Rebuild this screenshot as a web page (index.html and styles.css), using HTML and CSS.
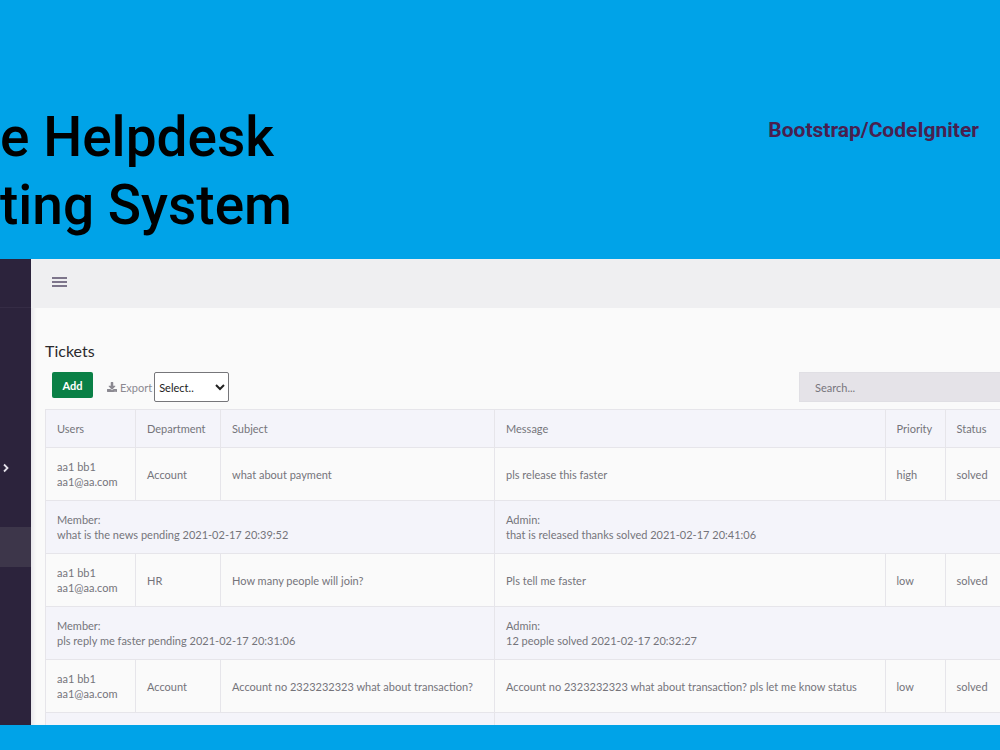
FILE: index.html
```html
<!DOCTYPE html>
<html lang="en">
<head>
    <meta charset="UTF-8">
    <meta name="viewport" content="width=device-width, initial-scale=1.0">
    <title>Helpdesk Ticketing System</title>
    <link rel="stylesheet" href="styles.css">
</head>
<body>
    <!-- Banner -->
    <header class="banner">
        <h1 class="banner-title">e Helpdesk<br>ting System</h1>
        <p class="banner-tech">Bootstrap/CodeIgniter</p>
    </header>

    <div class="app">
        <!-- Sidebar -->
        <nav class="sidebar" aria-label="Main menu">
            <div class="sidebar-brand"></div>
            <a href="#" class="sidebar-link" aria-label="Open submenu">
                <svg width="6" height="10" viewBox="0 0 6 10"><path d="M1 1.5L4.5 5L1 8.5" fill="none" stroke="#e4e1ea" stroke-width="1.8"/></svg>
            </a>
            <a href="#" class="sidebar-link active" aria-label="Tickets"></a>
        </nav>

        <div class="main">
            <div class="topbar">
                <button class="menu-btn" aria-label="Toggle menu">
                    <svg width="15" height="10" viewBox="0 0 15 10"><path d="M0 1H15M0 5H15M0 9H15" stroke="#7d758b" stroke-width="1.8"/></svg>
                </button>
            </div>

            <main class="content">
                <h2 class="page-title">Tickets</h2>

                <div class="toolbar">
                    <button class="button-add">Add</button>
                    <label for="exportSelect" class="export-label">
                        <svg width="10" height="10" viewBox="0 0 512 512" fill="#8b8991"><path d="M216 0h80c13 0 24 11 24 24v168h88c18 0 27 21 14 34L270 378c-7 7-20 7-28 0L90 226c-13-13-4-34 14-34h88V24c0-13 11-24 24-24zm296 376v112c0 13-11 24-24 24H24c-13 0-24-11-24-24V376c0-13 11-24 24-24h147l49 49c20 20 52 20 72 0l49-49h147c13 0 24 11 24 24zM388 464a20 20 0 1 0-40 0 20 20 0 0 0 40 0zm64 0a20 20 0 1 0-40 0 20 20 0 0 0 40 0z"/></svg>
                        Export
                    </label>
                    <select id="exportSelect" class="export-select">
                        <option>Select..</option>
                    </select>
                    <input type="text" class="search-input" placeholder="Search..." aria-label="Search">
                </div>

                <table class="tickets">
                    <colgroup>
                        <col class="col-users">
                        <col class="col-department">
                        <col class="col-subject">
                        <col class="col-message">
                        <col class="col-priority">
                        <col class="col-status">
                    </colgroup>
                    <thead>
                        <tr>
                            <th>Users</th>
                            <th>Department</th>
                            <th>Subject</th>
                            <th>Message</th>
                            <th>Priority</th>
                            <th>Status</th>
                        </tr>
                    </thead>
                    <tbody>
                        <tr>
                            <td>aa1 bb1<br>aa1@aa.com</td>
                            <td>Account</td>
                            <td>what about payment</td>
                            <td>pls release this faster</td>
                            <td>high</td>
                            <td>solved</td>
                        </tr>
                        <tr class="reply">
                            <td colspan="3">Member:<br>what is the news pending 2021-02-17 20:39:52</td>
                            <td colspan="3">Admin:<br>that is released thanks solved 2021-02-17 20:41:06</td>
                        </tr>
                        <tr>
                            <td>aa1 bb1<br>aa1@aa.com</td>
                            <td>HR</td>
                            <td>How many people will join?</td>
                            <td>Pls tell me faster</td>
                            <td>low</td>
                            <td>solved</td>
                        </tr>
                        <tr class="reply">
                            <td colspan="3">Member:<br>pls reply me faster pending 2021-02-17 20:31:06</td>
                            <td colspan="3">Admin:<br>12 people solved 2021-02-17 20:32:27</td>
                        </tr>
                        <tr>
                            <td>aa1 bb1<br>aa1@aa.com</td>
                            <td>Account</td>
                            <td>Account no 2323232323 what about transaction?</td>
                            <td>Account no 2323232323 what about transaction? pls let me know status</td>
                            <td>low</td>
                            <td>solved</td>
                        </tr>
                        <tr class="reply reply-empty">
                            <td colspan="3"></td>
                            <td colspan="3"></td>
                        </tr>
                    </tbody>
                </table>
            </main>
        </div>
    </div>
</body>
</html>
```

FILE: styles.css
```css
/* General Styles */
* {
    box-sizing: border-box;
}

body {
    margin: 0;
    min-height: 100vh;
    background-color: #00a3e8;
    font-family: Lato, "Open Sans", sans-serif;
    font-size: 11px;
    line-height: 15px;
    color: #75747a;
}

/* Banner */
.banner {
    display: flex;
    justify-content: space-between;
    align-items: flex-start;
    padding: 103px 21px 20px 0;
    font-family: Roboto, sans-serif;
}

.banner-title {
    margin: 0;
    font-size: 55px;
    line-height: 68px;
    font-weight: 500;
    color: #000;
}

.banner-tech {
    margin: 14px 0 0;
    font-size: 21px;
    line-height: 26px;
    font-weight: 700;
    color: #48204f;
}

/* Layout */
.app {
    display: flex;
    background-color: #fafafa;
}

.sidebar {
    width: 31px;
    flex-shrink: 0;
    background-color: #2c233c;
}

.sidebar-brand {
    height: 49px;
    margin-bottom: 140px;
    border-bottom: 1px solid #352c45;
}

.sidebar-link {
    display: flex;
    align-items: center;
    height: 40px;
    margin-bottom: 39px;
    padding-left: 3px;
}

.sidebar-link.active {
    background-color: #3d364a;
}

.main {
    flex: 1;
    min-width: 0;
    box-shadow: inset 4px 0 4px -2px #e4e3e8;
}

.topbar {
    display: flex;
    align-items: center;
    height: 49px;
    padding: 0 21px 3px;
    background-color: #efeff1;
}

.menu-btn {
    display: flex;
    padding: 0;
    border: none;
    background: none;
    cursor: pointer;
}

.content {
    padding: 33px 0 0 14px;
}

.page-title {
    margin: 0 0 10px;
    font-size: 16px;
    line-height: 20px;
    font-weight: 400;
    color: #2b2a2e;
}

/* Toolbar */
.toolbar {
    display: flex;
    align-items: center;
    height: 32px;
    margin-bottom: 6px;
    padding-left: 7px;
}

.button-add {
    width: 41px;
    height: 26px;
    margin: 0 14px 4px 0;
    padding: 0;
    border: none;
    border-radius: 2px;
    background-color: #0a8046;
    color: #fff;
    font-family: inherit;
    font-size: 11px;
    font-weight: 700;
    cursor: pointer;
}

.export-label {
    display: flex;
    align-items: center;
    gap: 3px;
    margin-right: 2px;
    color: #8b8991;
}

.export-select {
    width: 75px;
    height: 30px;
    padding: 0;
    border: 1px solid #76767a;
    border-radius: 2px;
    background-color: #fff;
    color: #222;
    font-family: inherit;
    font-size: 11px;
}

.search-input {
    width: 201px;
    height: 30px;
    margin-left: auto;
    padding: 0 15px;
    border: 1px solid #e0dfe4;
    border-right: none;
    background-color: #e5e3e8;
    font-family: inherit;
    font-size: 11px;
}

.search-input::placeholder {
    color: #77757c;
}

/* Tickets Table */
.tickets {
    width: 100%;
    table-layout: fixed;
    border-collapse: collapse;
}

.col-users {
    width: 90px;
}

.col-department {
    width: 85px;
}

.col-subject {
    width: 274px;
}

.col-priority {
    width: 60px;
}

.col-status {
    width: 55px;
}

.tickets th,
.tickets td {
    padding: 11px;
    border: 1px solid #e6e5ea;
    text-align: left;
    font-weight: 400;
    white-space: nowrap;
}

.tickets th:last-child,
.tickets td:last-child {
    border-right: none;
}

.tickets th,
.reply td {
    background-color: #f4f4fa;
}

.tickets .reply-empty td {
    padding: 6px 11px;
    border-bottom: none;
}
```
